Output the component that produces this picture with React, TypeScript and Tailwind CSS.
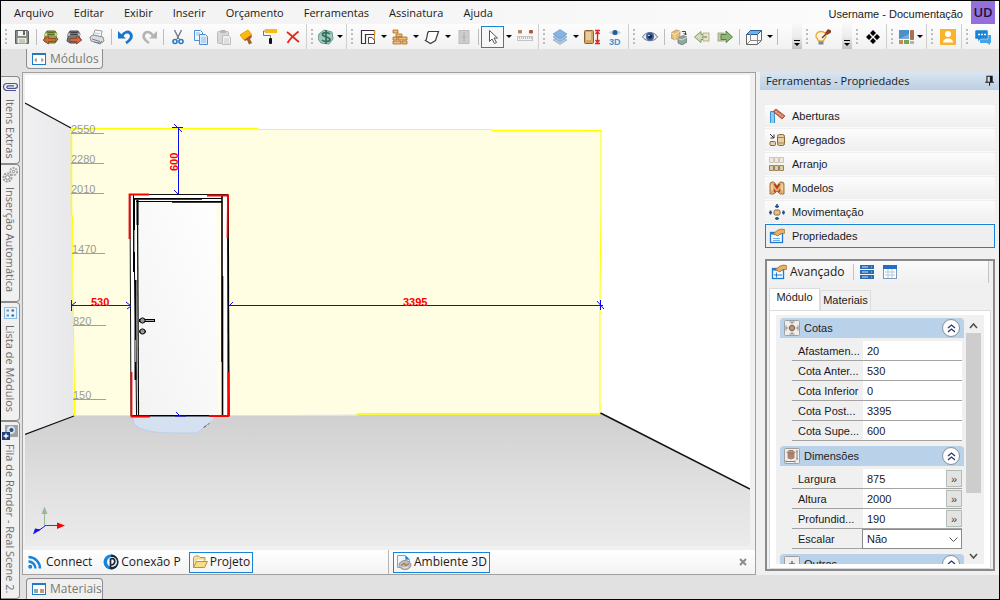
import { useState } from 'react';
import type { ReactNode } from 'react';

const icons: { [key: string]: ReactNode } = {
  save: (
    <>
      <path d="M1.5 1.5h12l1 1v12h-13z" fill="#8b8b8b" stroke="#5c5c5c" />
      <rect x="4" y="2" width="8" height="5" fill="#f4f4f4" />
      <rect x="9" y="2" width="2" height="4" fill="#666" />
      <rect x="3.5" y="9" width="9" height="5.5" fill="#e8efe0" />
      <path d="M5 11h6M5 13h6" stroke="#9aa98c" />
    </>
  ),
  chestIn: (
    <>
      <path d="M2 5l2-3h8l2 3-1 3 2 2-3 4H4l-3-2 1-4z" fill="#93a04a" stroke="#5c6a25" />
      <path d="M3 5.500h10M4.500 3.500h7" stroke="#5c6a25" />
      <path d="M2 6l2-1M12 5l2 1" stroke="#e0e59c" strokeWidth="2" />
      <path d="M0 11l5.500-4v2.500H13v3H5.500V15z" fill="#d4683a" stroke="#7a3216" strokeWidth=".6" />
    </>
  ),
  chestOut: (
    <>
      <path d="M2 5l2-3h8l2 3-1 3 2 2-3 4H4l-3-2 1-4z" fill="#77777f" stroke="#4b4b52" />
      <path d="M3 5.500h10M4.500 3.500h7" stroke="#3f3f46" />
      <path d="M2 6l2-1M12 5l2 1" stroke="#c5c5cd" strokeWidth="2" />
      <path d="M16 11l-5.500-4v2.500H4v3h6.500V15z" fill="#d4683a" stroke="#7a3216" strokeWidth=".6" />
    </>
  ),
  print: (
    <>
      <path d="M4 7l2-6 7 1-1 6z" fill="#fff" stroke="#9b9b9b" />
      <path d="M6 4l5 .5M6 6l4 .5" stroke="#a9c8ea" />
      <path d="M1 8l3-2 10 2 1 4-4 3-9-3z" fill="#dcdcde" stroke="#8f8f94" />
      <path d="M3 10l8 2.500M5 13l6 1 2-2" stroke="#6f7f96" fill="none" />
    </>
  ),
  undo: (
    <>
      <path d="M4 7c2-4 6-5 8-3 3 3 1 7-4 10" fill="none" stroke="#1875cf" strokeWidth="2.800" />
      <path d="M0 2v7.500h8z" fill="#1875cf" />
    </>
  ),
  redo: (
    <>
      <path d="M12 7C10 3 6 2 4 4c-3 3-1 7 4 10" fill="none" stroke="#b4b4b4" strokeWidth="2.600" />
      <path d="M16 2v7.500H8z" fill="#b4b4b4" />
    </>
  ),
  cut: (
    <>
      <path d="M4.500 1l4.500 9M11.500 1L7 10" stroke="#6e7b88" strokeWidth="1.400" />
      <circle cx="5" cy="12.500" r="2" fill="none" stroke="#2878c8" strokeWidth="1.600" />
      <circle cx="11" cy="12.500" r="2" fill="none" stroke="#2878c8" strokeWidth="1.600" />
    </>
  ),
  copy: (
    <>
      <path d="M1.500 1.500h6l2 2v8h-8z" fill="#eef6ff" stroke="#4d8fd6" />
      <path d="M6.500 5.500h6l2 2v8h-8z" fill="#dcecfc" stroke="#4d8fd6" />
      <path d="M3 4h4M3 6h3M8 9h5M8 11h5M8 13h5" stroke="#8fbbe8" />
    </>
  ),
  paste: (
    <>
      <rect x="1.500" y="2.500" width="11" height="12" rx="1" fill="#d8d8d8" stroke="#bdbdbd" />
      <rect x="4.500" y="1" width="5" height="3" fill="#b5b5b5" />
      <path d="M6.500 6.500h6l2 2v7h-8z" fill="#f1f1f1" stroke="#bdbdbd" />
      <path d="M8 10h5M8 12h5M8 14h5" stroke="#cdcdcd" />
    </>
  ),
  brush: (
    <>
      <path d="M1 6l8-5 4 5-8 5z" fill="#fdb913" stroke="#e8a400" />
      <path d="M5 11l7-5 1 2-2 2 2 4-3 1.500L8 11l-2 1z" fill="#a45c2a" />
    </>
  ),
  roller: (
    <>
      <rect x="3" y="0" width="12" height="4" fill="#fdb913" />
      <path d="M3 2H1.500v4.500h7V9" fill="none" stroke="#777" />
      <rect x="7" y="9" width="3" height="6" rx="1" fill="#111" />
    </>
  ),
  remove: (
    <path d="M2 3c4 3 8 7 12 10M13.500 2.500C9 6 5 10 2.500 14" fill="none" stroke="#e02c1b" strokeWidth="1.800" />
  ),
  dollar: (
    <>
      <path d="M1 5l5-4 8 2 1 7-4 5-8-1-3-4z" fill="#a5c8ba" stroke="#6c9c92" />
      <path d="M12 5C10 3 4.500 3 4.500 5.500S12 8 12 10.500 6 13 4 11M8 1v14" fill="none" stroke="#2d6f5e" strokeWidth="1.700" />
    </>
  ),
  wall: (
    <>
      <path d="M1.500 14.500v-13h13v4h-9v9z" fill="#fff" stroke="#3a2f45" strokeWidth="1.200" />
      <path d="M14.500 1v13.500h-7" fill="none" stroke="#d08a3a" />
      <path d="M8.500 14.500v-6h3.500l2.500 3v3z" fill="#fff" stroke="#4a4a55" />
    </>
  ),
  bricks: (
    <path d="M1 1h5v3H1zM4 5h6v3H4zM1 8h4v3H1zM6 8h9v3H6zM1 12h8v3H1zM10 12h5v3h-5z" fill="#edbd70" stroke="#a8682a" strokeWidth=".8" />
  ),
  floor: <path d="M4.500 2.500h10l-3 9-5 3-5-3c2-1 1-7 3-9z" fill="#fdfdfd" stroke="#3c3c3c" strokeWidth="1.200" />,
  column: (
    <>
      <rect x="3" y="1.500" width="10" height="13" fill="#cdcdcd" stroke="#bdbdbd" />
      <path d="M8 3v10M6 8h4" stroke="#b0b0b0" />
    </>
  ),
  cursor: <path d="M4.500 1.500v11l2.500-2.500 2.500 4.500 2-1-2.500-4.500h3.500z" fill="#fff" stroke="#555" />,
  ruler: (
    <>
      <rect x="1" y="1" width="4" height="3.500" rx="1" fill="#b98257" />
      <rect x="12" y="1" width="4" height="3.500" rx="1" fill="#b9523f" />
      <rect x=".5" y="7.500" width="15" height="4" fill="#f2f2f2" stroke="#c4c4c4" />
      <path d="M2 9h13" stroke="#888" strokeDasharray="1 1" />
    </>
  ),
  layers: (
    <>
      <path d="M1 11l7 4.500 7-4.500-7-4z" fill="#b4c8dc" stroke="#84a0bc" strokeWidth=".6" />
      <path d="M1 8l7 4.500L15 8 8 4z" fill="#a0c0e2" stroke="#6f98c4" strokeWidth=".6" />
      <path d="M1 5l7 4.500L15 5 8 .5z" fill="#86b5e4" stroke="#5b8dc0" strokeWidth=".6" />
    </>
  ),
  doorHeight: (
    <>
      <rect x=".5" y="1.500" width="9" height="13" rx="1" fill="#d3a569" stroke="#8b6333" />
      <rect x="2" y="3" width="5" height="8" fill="#e9cb9c" />
      <path d="M11 1.500h5M11 14.500h5M13.500 2v12M11.500 5l2-2.500 2 2.500M11.500 11l2 2.500 2-2.500" fill="none" stroke="#e2231a" strokeWidth="1.300" />
    </>
  ),
  view3d: (
    <>
      <path d="M2 3.500C5 0 11 0 14 3.500 11 7 5 7 2 3.500z" fill="#c8d7e4" />
      <circle cx="8" cy="3.500" r="2.500" fill="#1f5f97" />
      <text x="2" y="15.500" fontSize="9" fontWeight="700" fill="#4a90c9" fontFamily="Liberation Sans, sans-serif">3D</text>
    </>
  ),
  eye: (
    <>
      <path d="M.5 8C4 2 12 2 15.500 8 12 13 4 13 .5 8z" fill="#e9eef6" stroke="#6c7488" />
      <circle cx="8" cy="7.500" r="4" fill="#3d5f9e" />
      <circle cx="8" cy="7.500" r="2" fill="#16213f" />
      <circle cx="7" cy="6.500" r=".8" fill="#fff" />
    </>
  ),
  boxes: (
    <>
      <path d="M0 4l5-3 4 1v6l-5 3-4-2z" fill="#e3bb7a" stroke="#b08a4d" strokeWidth=".7" />
      <path d="M0 4l4 1.500 5-3.500M4 5.500V11" stroke="#fbe6bd" fill="none" />
      <path d="M7 9.500l5-3 4 1.500v5l-5 3-4-2z" fill="#93a59c" stroke="#5c7167" strokeWidth=".7" />
      <path d="M7 9.500l4 1.500 5-3" stroke="#d5ded9" fill="none" />
      <path d="M11 2.500h3.500V6M12.500 4l2 2 1.500-1.500" stroke="#444" fill="none" />
    </>
  ),
  arrowLeft: (
    <>
      <path d="M.5 8L7 2.500v3h5v5H7v3z" fill="#d2dcbc" stroke="#7f9863" />
      <rect x="9" y="4" width="6" height="8" fill="#ece2c6" stroke="#9b9b78" strokeWidth=".7" />
      <path d="M8 8h5" stroke="#9fb286" strokeWidth="2" />
    </>
  ),
  arrowRight: (
    <>
      <rect x="1" y="4" width="6" height="8" fill="#c5cbab" stroke="#8b9568" strokeWidth=".7" />
      <path d="M15.500 8L9 2v3.500H4v5h5v3z" fill="#92b578" stroke="#54803d" />
    </>
  ),
  cube: (
    <>
      <path d="M4.500 1.500h11v10l-4 4H.500v-10z" fill="#fafafa" stroke="#666" />
      <path d="M.5 5.500h11l4-4h-11z" fill="#6cb2f0" stroke="#2a5f95" />
      <path d="M11.500 5.500v10M4.500 5v7M.5 15.500l4-4h11" stroke="#888" fill="none" />
    </>
  ),
  bulb: (
    <>
      <path d="M1 7c0-6 10-6 10 0 0 2-2 3-2.500 5h-5C3 10 1 9 1 7z" fill="#fff4d8" stroke="#eda63a" strokeWidth="1.300" />
      <rect x="3.500" y="12.500" width="5" height="3" fill="#7d8794" />
      <path d="M10 4l3-4 3 1.500v2L12 6z" fill="#8b3e1e" />
      <path d="M7 9l4-4" stroke="#444" strokeWidth="1.300" />
    </>
  ),
  diamonds: <path d="M8 1l3 3-3 3-3-3zM8 9l3 3-3 3-3-3zM4 5l3 3-3 3-3-3zM12 5l3 3-3 3-3-3z" fill="#000" />,
  tiles: (
    <>
      <rect x="1" y="1" width="10" height="9" fill="#4d8fc9" />
      <path d="M1 10h10V5z" fill="#75aede" />
      <rect x="12" y="1" width="4" height="10" rx="1" fill="#a8724c" />
      <rect x="1" y="11" width="4" height="4" fill="#c98a52" />
      <rect x="6" y="11" width="5" height="4" fill="#7ba348" />
      <rect x="12" y="12" width="4" height="3" fill="#b3b3b3" />
    </>
  ),
  person: (
    <>
      <rect width="16" height="16" fill="#fbb429" />
      <circle cx="8" cy="5" r="3" fill="#fff" />
      <path d="M3 13.500C3 8 13 8 13 13.500z" fill="#fff" />
    </>
  ),
  chat: (
    <>
      <path d="M5 6h11v8h-1v2l-3-2H5z" fill="#4aa3e3" />
      <path d="M1 1h11l1 1v8H6l-3 2.500V10H0V2z" fill="#1684d8" stroke="#f6f6f6" strokeWidth=".5" />
      <path d="M3 5.500h2M6 5.500h2M9 5.500h2" stroke="#fff" strokeWidth="1.500" />
    </>
  ),
  modules: (
    <>
      <rect x="1.500" y="2.500" width="13" height="11" fill="#fff" stroke="#1f78c8" />
      <path d="M1 3h14" stroke="#1f78c8" strokeWidth="2" />
      <path d="M3.500 9L5.500 7v4zM12.500 9l-2-2v4z" fill="#8d8278" stroke="#c3ab96" strokeWidth=".7" />
    </>
  ),
  materials: (
    <>
      <rect x="1.500" y="2.500" width="13" height="11" fill="#fff" stroke="#1f78c8" />
      <path d="M1 3h14" stroke="#1f78c8" strokeWidth="2" />
      <rect x="3" y="8" width="4" height="4" fill="#8fa99b" />
      <rect x="9" y="8" width="4" height="4" fill="#d0966c" />
    </>
  ),
  clip: (
    <path d="M14 11.500H5a3.500 3.500 0 010-7h8a2.300 2.300 0 010 4.800H6a1.200 1.200 0 010-2.400h6" fill="none" stroke="#4a5291" strokeWidth="1.200" />
  ),
  gears: (
    <>
      <circle cx="5.500" cy="10.500" r="4" fill="none" stroke="#9d9d9d" strokeWidth="2" strokeDasharray="2 1" />
      <circle cx="5.500" cy="10.500" r="2" fill="none" stroke="#8d8d8d" />
      <circle cx="11.500" cy="4.500" r="3.500" fill="none" stroke="#a5a5a5" strokeWidth="2" strokeDasharray="2 1" />
      <circle cx="11.500" cy="4.500" r="1.200" fill="none" stroke="#8d8d8d" />
    </>
  ),
  moduleList: (
    <>
      <rect x="2.500" y="2.500" width="12" height="11" fill="#eaf4fd" stroke="#8abce4" />
      <path d="M4.500 5.500h2.500M4.500 10.500h2.500" stroke="#6f8fae" strokeWidth="2" />
      <path d="M9.500 5.500h2.500M9.500 10.500h2.500" stroke="#2e6ba6" strokeWidth="2" />
    </>
  ),
  renderQueue: (
    <>
      <rect x="3" y="1" width="13" height="12" fill="#9ea3a9" />
      <circle cx="9" cy="6" r="4" fill="#dbe2ea" />
      <circle cx="9.500" cy="6" r="2" fill="#234a78" />
      <rect x="0" y="8" width="8" height="8" fill="#22407c" />
      <path d="M4 9.500v5M1.500 12h5" stroke="#fff" strokeWidth="1.400" />
    </>
  ),
  connect: (
    <>
      <circle cx="3.200" cy="12.800" r="2" fill="#1684d8" />
      <path d="M1.500 7.500a7 7 0 017 7M1.500 3a11.500 11.500 0 0111.500 11.500" fill="none" stroke="#1684d8" strokeWidth="2.400" />
    </>
  ),
  conexao: (
    <>
      <circle cx="8" cy="8" r="7.500" fill="#1684d8" />
      <path d="M8 .5a7.500 7.500 0 010 15z" fill="#1d2738" />
      <circle cx="9" cy="8" r="5" fill="#f4f7fa" />
      <path d="M7.500 15V4.500M7.500 5C13 2.500 13.500 11.500 7.500 11" fill="none" stroke="#1d2738" strokeWidth="1.700" />
    </>
  ),
  folder: (
    <>
      <path d="M1.500 13.500v-10l2-1.500h3l1.500 1.500h5v3" fill="#f8e6a6" stroke="#c0913a" />
      <path d="M4 5h8v4H4z" fill="#fff" stroke="#d9b765" strokeWidth=".7" />
      <path d="M1.500 13.500l3-6h11l-3 6z" fill="#fbdc82" stroke="#c0913a" />
    </>
  ),
  ambient: (
    <>
      <path d="M1.500 13.500v-12h8l4 4v8z" fill="#eef6fd" stroke="#74a8dc" />
      <path d="M9.500 1.500v4h4" fill="#2c7cc9" stroke="#74a8dc" />
      <ellipse cx="9" cy="11" rx="6" ry="4.500" fill="#b9bfc5" stroke="#8d959e" />
      <path d="M5 11.500l3-2 2 2 3-2" stroke="#bf7a37" fill="none" strokeWidth="1.500" />
      <path d="M7 13.500c2 1 4 0 5-1" stroke="#f3f3f3" fill="none" />
    </>
  ),
  pin: (
    <path d="M4.500 9V2.500h6V9M8.500 2.500V9M9.500 2.500V9M2.500 9.500h10M7.500 9.500v4" fill="none" stroke="#1a1a1a" strokeWidth="1.200" />
  ),
  openings: (
    <>
      <path d="M1.500 15V3.500h4V15" fill="#8cc9ee" stroke="#3d93cb" />
      <path d="M4 3.500L7 1l9 7-3 3z" fill="#d4694c" stroke="#8f3c26" strokeWidth=".7" />
      <path d="M6.500 3.500l7 5" stroke="#f5cfb5" strokeWidth="1.300" strokeDasharray="1.500 1" />
    </>
  ),
  aggregates: (
    <>
      <rect x="8.500" y="2.500" width="7" height="11" rx="2" fill="#e6cda3" stroke="#8a6532" />
      <path d="M9 5.500h6M9 11h6" stroke="#a98552" />
      <rect x="1" y="9.500" width="5.500" height="4" rx="1" fill="#e6cda3" stroke="#8a6532" />
      <path d="M1 2l4 4M5 2.500V6H1.500" fill="none" stroke="#333" />
    </>
  ),
  array: (
    <>
      <path d="M.5 1.500h4v5h-4zM5.500 1.500h4v5h-4zM10.500 1.500h4v5h-4z" fill="#f0eadf" stroke="#cdc5b7" />
      <path d="M.5 9.500h4v5h-4zM5.500 9.500h4v5h-4zM10.500 9.500h4v5h-4z" fill="#e0cba8" stroke="#98835e" />
    </>
  ),
  models: (
    <>
      <path d="M1 4q0-2 2-2h2l3 4 3-4h2q2 0 2 2v10h-4l-3-3-3 3H1z" fill="#ddae6e" stroke="#a87840" />
      <path d="M5.500 4L8 8l2.500-4M5 9.500l1.500 3M11 9.500l-1.500 3" fill="none" stroke="#b7361d" strokeWidth="1.600" />
      <path d="M3 4.500v6M13 4.500v6" stroke="#f8dcae" strokeWidth="1.500" />
    </>
  ),
  move: (
    <>
      <rect x="5" y="6" width="6" height="5" rx="1.500" fill="#e0c294" stroke="#8a6532" />
      <path d="M8 0v4M6 2.500h4M8 13v3M6 14.500h4M0 8.500h3M1.500 6.500v4M13 8.500h3M14.500 6.500v4" stroke="#234f87" strokeWidth="1.600" />
    </>
  ),
  properties: (
    <>
      <rect x="1.500" y="4.500" width="12" height="10" fill="#f4faff" stroke="#1e7bd0" strokeWidth="1.300" />
      <path d="M4 10.500h7M4 12.500h7" stroke="#6fb0e8" />
      <path d="M2 5.500h10" stroke="#1e7bd0" strokeWidth="2" />
      <path d="M4 6l5-4 4-1 3 1v3l-5 1-2 2-2-1z" fill="#e8b262" stroke="#99692c" strokeWidth=".8" />
    </>
  ),
  advanced: (
    <>
      <rect x="1.500" y="4.500" width="11" height="10" fill="#f4faff" stroke="#1e7bd0" strokeWidth="1.300" />
      <path d="M5.500 8.500v5M3 11h8" stroke="#1e7bd0" />
      <path d="M2 5.500h10" stroke="#1e7bd0" strokeWidth="2" />
      <path d="M4 6l5-4 4-1 3 1v3l-5 1-2 2-2-1z" fill="#e8b262" stroke="#99692c" strokeWidth=".8" />
    </>
  ),
  rows: (
    <>
      <path d="M1 1h14v4H1zM1 6h14v4H1zM1 11h14v4H1z" fill="#2c6cb0" />
      <path d="M3 3h6M3 8h6M3 13h6" stroke="#cfe2f5" />
      <path d="M12 3h1M12 8h1M12 13h1" stroke="#8ed0ff" />
    </>
  ),
  grid: (
    <>
      <rect x="1.500" y="2.500" width="13" height="12" fill="#fff" stroke="#7b98bb" />
      <rect x="1" y="1" width="14" height="4" fill="#1f6fc4" />
      <path d="M6 5v9M10 5v9M3 8h10M3 11h10" stroke="#b5c9df" />
    </>
  ),
  cotas: (
    <>
      <rect x=".5" y=".5" width="15" height="15" rx="1" fill="#eee" stroke="#a0a0a0" />
      <rect x="5.500" y="5.500" width="5" height="5" rx="1.500" fill="#b98b73" stroke="#8b7060" />
      <path d="M2 5.500v5M14 5.500v5M5.500 2h5M5.500 14h5M2 8h2.500M11.500 8H14M8 2v2.500M8 11.500V14" stroke="#8a8a8a" />
    </>
  ),
  dims: (
    <>
      <rect x=".5" y=".5" width="15" height="15" rx="1" fill="#eee" stroke="#a0a0a0" />
      <path d="M3 4.500l2-2h4l2 2-1 1v4.500l-3 1-3-1V5.500z" fill="#c09a84" stroke="#8b6c58" strokeWidth=".8" />
      <path d="M4 5h6M6 5.500v4M8 5.500v4" stroke="#8b5b44" strokeWidth=".8" />
      <path d="M12 3h2M12 11h2M13 3v8M2 13.500h9M2 12.500v2M11 12.500v2" stroke="#808080" />
    </>
  ),
  others: (
    <>
      <rect x=".5" y=".5" width="15" height="15" rx="1" fill="#eee" stroke="#a0a0a0" />
      <path d="M8 5v7M5 8h6" stroke="#707070" strokeWidth="1.500" />
    </>
  ),
};

function Icon({ name, className = 'size-4' }: { name: string; className?: string }) {
  return (
    <svg viewBox="0 0 16 16" className={`${className} shrink-0`} aria-hidden="true">
      {icons[name]}
    </svg>
  );
}

const Grip = () => (
  <span className="w-[9px] h-4 flex flex-col items-center justify-between">
    <i className="size-[2px] bg-[#bcbcbc]" />
    <i className="size-[2px] bg-[#bcbcbc]" />
    <i className="size-[2px] bg-[#bcbcbc]" />
    <i className="size-[2px] bg-[#bcbcbc]" />
  </span>
);

const Sep = () => (
  <span className="w-[6px] h-4 flex justify-center">
    <i className="w-px h-full bg-[#bdbdbd]" />
  </span>
);

const Tool = ({ icon, label, tight }: { icon: string; label: string; tight?: boolean }) => (
  <button type="button" aria-label={label} className={`${tight ? 'w-[19px]' : 'w-[23px]'} h-[22px] flex items-center justify-center`}>
    <Icon name={icon} />
  </button>
);

const Caret = ({ label }: { label: string }) => (
  <button type="button" aria-label={label} className="w-[9px] h-[22px] flex items-center justify-center">
    <svg viewBox="0 0 6 3" className="w-[6px] h-[3px]" aria-hidden="true">
      <path d="M0 0h6L3 3z" fill="#000" />
    </svg>
  </button>
);

const Overflow = () => (
  <button type="button" aria-label="Mais botões" className="w-[10px] h-full flex items-end justify-center pb-[3px] bg-gradient-to-b from-[#f8f8f8] via-[#ececec] to-[#c2c2c2]">
    <svg viewBox="0 0 6 6" className="size-[6px]" aria-hidden="true">
      <path d="M0 0h6v1H0zM0 3h6L3 6z" fill="#000" />
    </svg>
  </button>
);

const Group = ({ children, last }: { children: ReactNode; last?: boolean }) => (
  <div className={`h-full flex items-center shrink-0 ${last ? '' : 'border-r border-[#cfcfcf] pr-[2px]'}`}>
    <Grip />
    {children}
  </div>
);

const menus = ['Arquivo', 'Editar', 'Exibir', 'Inserir', 'Orçamento', 'Ferramentas', 'Assinatura', 'Ajuda'];

const sideTabs = [
  { icon: 'clip', label: 'Itens Extras', className: 'h-[88px]' },
  { icon: 'gears', label: 'Inserção Automática', className: 'h-[138px]' },
  { icon: 'moduleList', label: 'Lista de Módulos', className: 'h-[119px]' },
  { icon: 'renderQueue', label: 'Fila de Render - Real Scene 2.', className: 'flex-1 min-h-0' },
];

const tools = [
  { icon: 'openings', label: 'Aberturas' },
  { icon: 'aggregates', label: 'Agregados' },
  { icon: 'array', label: 'Arranjo' },
  { icon: 'models', label: 'Modelos' },
  { icon: 'move', label: 'Movimentação' },
  { icon: 'properties', label: 'Propriedades' },
];

const cotas = [
  { id: 'afastamento', label: 'Afastamen...', value: '20' },
  { id: 'cota-anterior', label: 'Cota Anter...', value: '530' },
  { id: 'cota-inferior', label: 'Cota Inferior', value: '0' },
  { id: 'cota-posterior', label: 'Cota Post...', value: '3395' },
  { id: 'cota-superior', label: 'Cota Supe...', value: '600' },
];

const dimensoes = [
  { id: 'largura', label: 'Largura', value: '875' },
  { id: 'altura', label: 'Altura', value: '2000' },
  { id: 'profundidade', label: 'Profundid...', value: '190' },
];

const levels = [
  { x: 71, y: 133, value: '2550' },
  { x: 71, y: 163, value: '2280' },
  { x: 71, y: 193, value: '2010' },
  { x: 72, y: 253, value: '1470' },
  { x: 73, y: 325, value: '820' },
  { x: 73, y: 399, value: '150' },
];

function Scene() {
  return (
    <svg viewBox="25 75 725 471" preserveAspectRatio="xMidYMid slice" className="block w-full flex-1 min-h-0 bg-white" role="img" aria-label="Ambiente 3D">
      <defs>
        <linearGradient id="floor" x1="0" y1="0" x2="0" y2="1">
          <stop offset="0" stopColor="#cfcfcf" />
          <stop offset="0.5" stopColor="#dfdfdf" />
          <stop offset="1" stopColor="#ebebeb" />
        </linearGradient>
        <linearGradient id="side" x1="0" y1="0" x2="1" y2="0">
          <stop offset="0" stopColor="#f0f0f1" />
          <stop offset="1" stopColor="#e8e8eb" />
        </linearGradient>
        <linearGradient id="leaf" x1="0" y1="1" x2="1" y2="0">
          <stop offset="0" stopColor="#f3f3f4" />
          <stop offset="1" stopColor="#fff" />
        </linearGradient>
      </defs>

      {/* room */}
      <path d="M25 103L71 128 74 416 25 434z" fill="url(#side)" />
      <path d="M25 434L74 416 600 413 750 489V546H25z" fill="url(#floor)" />
      <path d="M71 128L601 130 600 413 74 416z" fill="#fffee2" />
      <path d="M71.500 128.500H258V129.500H492V130.500H601V207L600 300V413.500H357V415.500H74.500V392L73 300 72.500 216 71.500 215z" fill="none" stroke="#ffff00" />
      <path d="M71 128.500H258M492 130.500H601M357 414H600M71.500 128V215M74.500 392V416" fill="none" stroke="#ffff00" strokeWidth="1.500" />
      <path d="M25 103L71 128M25 434.500L74 416" fill="none" stroke="#111" strokeWidth="1.200" />
      <path d="M600.500 413L750 489" stroke="#111" strokeWidth="1.500" />

      {/* heights on the wall */}
      {levels.map(level => (
        <g key={level.value}>
          <text x={level.x} y={level.y} fontSize="11" fill="#9b9b98" fontFamily="Liberation Sans, sans-serif">{level.value}</text>
          <path d={`M${level.x} ${level.y + 0.5}h33`} stroke="#a0a09a" />
        </g>
      ))}

      {/* door swing */}
      <path d="M133 416L134 424Q142 433 172 433H197L218 416z" fill="#d5e1f1" stroke="#bdd0e6" />
      <path d="M204 427.500l2-2M208 424.500l1-1" stroke="#111" />

      {/* frame and leaf */}
      <path d="M130 194.500H228L229 416H131z" fill="#fff" stroke="#111" />
      <path d="M137 200H223V416H138z" fill="url(#leaf)" />
      <path d="M216 203H221V415H218z" fill="#fffde9" />
      <path d="M133.500 194V198.500H222M134 199V250L135.500 320 136.500 416M136 201.500H222" fill="none" stroke="#000" />
      <path d="M134.500 199H202M172 202H222" stroke="#000" strokeWidth="1.600" />
      <path d="M134 198V272M135.500 280V380M137.500 200V225" stroke="#000" strokeWidth="2" />
      <path d="M137.500 200L138.500 416" stroke="#000" strokeWidth="1.200" />
      <path d="M134.500 230V252M135.500 340V362" stroke="#9a9a90" strokeWidth="1.200" />
      <path d="M222 195V362M222.500 276V416" stroke="#000" strokeWidth="1.600" />
      <path d="M228 195L228.500 416" stroke="#000" strokeWidth="1.800" />
      <path d="M131 415.500H228" stroke="#000" />

      {/* handle */}
      <path d="M139 320.500H155" stroke="#000" strokeWidth="3" />
      <path d="M142 320.500H154" stroke="#a6b0a6" />
      <circle cx="142.500" cy="320.500" r="2.600" fill="#999" stroke="#000" />
      <path d="M139 331.500H146" stroke="#000" strokeWidth="2" />
      <circle cx="142.500" cy="331.500" r="2.600" fill="#999" stroke="#000" />

      {/* selection */}
      <path d="M149 194.500H129.500V239M207 195.500H228L227.500 238M131.500 372V416.500H150M209 416H228.500V372" fill="none" stroke="#ff0000" strokeWidth="1.800" />

      {/* dimensions */}
      <g fill="none" stroke="#0c0cf0">
        <path d="M178.500 127V194M172 127.500H183M174 124L182 132M174 190L178 194" />
        <path d="M71.500 300V311M71 305.500H131M71 306L76 302M126 302L131 306L127 309" />
        <path d="M229 305.500H603M229 306L233 302M600.500 300V310M597 301L604 309M175 416H186M176 412L180 416" />
      </g>
      <g fontSize="11" fontWeight="700" fill="#ff0000" fontFamily="Liberation Sans, sans-serif">
        <text x="91" y="306">530</text>
        <text x="403" y="306">3395</text>
        <text transform="translate(178 171) rotate(-90)">600</text>
      </g>

      {/* axes */}
      <path d="M44.500 526V512" stroke="#9bb89b" />
      <path d="M44.500 506.500L47.500 514H41.500z" fill="#9bb89b" />
      <path d="M45 525.500H58" stroke="#ff0000" />
      <path d="M57 522.500L65 525.500 57 529z" fill="#ff0000" />
      <path d="M45 526L38 531" stroke="#1010ff" />
      <path d="M41 529.500L33 534.500 35 528.500z" fill="#1010ff" />
    </svg>
  );
}

function GroupHeader({ icon, title }: { icon: string; title: string }) {
  return (
    <div className="h-5 shrink-0 rounded-t bg-[#bad1ea] flex items-center px-1 gap-1 text-[#1e1e1e]">
      <Icon name={icon} />
      <span className="flex-1 leading-5">{title}</span>
      <button type="button" aria-label={`Recolher ${title}`} className="size-[18px] rounded-full bg-white border border-[#8a8f96] flex items-center justify-center">
        <svg viewBox="0 0 9 9" className="size-[9px]" aria-hidden="true">
          <path d="M1 4l3.500-3L8 4M1 8l3.500-3L8 8" fill="none" stroke="#24387c" strokeWidth="1.300" />
        </svg>
      </button>
    </div>
  );
}

function Field({ id, label, value, more }: { id: string; label: string; value: string; more?: boolean }) {
  return (
    <div className="h-5 flex border-b border-[#a3a3a3]">
      <label htmlFor={id} className="w-[71px] pl-[6px] leading-5 whitespace-nowrap">{label}</label>
      <input id={id} defaultValue={value} className="flex-1 min-w-0 h-full bg-white pl-1 outline-none" />
      {more && (
        <button type="button" aria-label={`Mais opções de ${label}`} className="w-4 my-px border border-[#b4bcb8] bg-[#e3e3e3] text-[11px] leading-3 text-[#444]">
          »
        </button>
      )}
    </div>
  );
}

export default function App() {
  const [selected, setSelected] = useState('Propriedades');
  const [tab, setTab] = useState('Módulo');

  return (
    <div className="h-screen flex flex-col border border-black bg-[#e1e1e1] text-[12px] text-[#1a1a1a] font-['Open_Sans',sans-serif] overflow-hidden">
      <header className="h-[23px] shrink-0 flex items-center bg-gradient-to-r from-[#f0f0f0] to-[#fdfdfd]">
        <nav className="flex items-center pl-[13px] gap-5 text-[11px]">
          {menus.map(menu => (
            <button key={menu} type="button" className="leading-5">{menu}</button>
          ))}
        </nav>
        <span className="ml-auto mt-1 mr-2 font-['Liberation_Sans',sans-serif] text-[11px]">Username - Documentação</span>
        <span className="w-6 h-full mr-1 bg-[#9370db] text-center text-[13px] leading-[22px] text-[#1c1233] font-semibold">UD</span>
      </header>

      <div role="toolbar" className="h-[25px] shrink-0 flex items-stretch bg-gradient-to-b from-[#fdfdfd] to-[#f1f1f1]">
        <Group>
          <Tool icon="save" label="Salvar" />
          <Sep />
          <Tool icon="chestIn" label="Importar" />
          <Tool icon="chestOut" label="Exportar" />
          <Tool icon="print" label="Imprimir" />
          <Sep />
          <Tool icon="undo" label="Desfazer" />
          <Tool icon="redo" label="Refazer" />
          <Sep />
          <Tool icon="cut" label="Recortar" />
          <Tool icon="copy" label="Copiar" />
          <Tool icon="paste" label="Colar" />
          <Tool icon="brush" label="Pincel" />
          <Tool icon="roller" label="Pintar" />
          <Tool icon="remove" label="Excluir" />
        </Group>
        <Group>
          <Tool icon="dollar" label="Orçamento" tight />
          <Caret label="Opções de orçamento" />
        </Group>
        <Group>
          <Tool icon="wall" label="Parede" />
          <Caret label="Opções de parede" />
          <Tool icon="bricks" label="Alvenaria" />
          <Caret label="Opções de alvenaria" />
          <Tool icon="floor" label="Piso" />
          <Caret label="Opções de piso" />
          <Tool icon="column" label="Coluna" />
          <Sep />
          <button type="button" aria-label="Selecionar" className="w-[23px] h-[22px] border border-[#1883d7] bg-[#f7f7f7] flex items-center justify-center">
            <Icon name="cursor" />
          </button>
          <Caret label="Opções de seleção" />
          <Tool icon="ruler" label="Medir" />
        </Group>
        <Group>
          <Tool icon="layers" label="Camadas" />
          <Caret label="Opções de camadas" />
          <Tool icon="doorHeight" label="Altura" />
          <Tool icon="view3d" label="Visão 3D" />
        </Group>
        <div className="flex items-center">
          <Grip />
          <Tool icon="eye" label="Visualizar" />
          <Sep />
          <Tool icon="boxes" label="Substituir" />
          <Tool icon="arrowLeft" label="Anterior" />
          <Tool icon="arrowRight" label="Próximo" />
          <Sep />
          <Tool icon="cube" label="Vista" />
          <Caret label="Opções de vista" />
          <Sep />
          <span className="w-3" />
          <Overflow />
        </div>
        <div className="flex items-center">
          <Grip />
          <Tool icon="bulb" label="Iluminação" />
          <span className="w-2" />
          <Overflow />
        </div>
        <Group>
          <Tool icon="diamonds" label="Organizar" />
        </Group>
        <Group>
          <Tool icon="tiles" label="Painéis" tight />
          <Caret label="Opções de painéis" />
        </Group>
        <Group>
          <Tool icon="person" label="Conta" />
        </Group>
        <Group last>
          <Tool icon="chat" label="Chat" />
        </Group>
      </div>

      <div className="flex-1 min-h-0 flex">
        <aside className="w-[19px] shrink-0 flex flex-col pt-[27px] text-[11px]">
          {sideTabs.map(item => (
            <button
              key={item.label}
              type="button"
              className={`${item.className} shrink-0 border border-l-0 border-[#8c8c8c] rounded-r bg-[#f0f0f0] text-[#6d6d6d] flex flex-col items-center justify-start gap-1 pt-[2px]`}
            >
              <Icon name={item.icon} />
              <span className="[writing-mode:vertical-rl] leading-4 whitespace-nowrap">{item.label}</span>
            </button>
          ))}
        </aside>

        <div className="flex-1 min-w-0 flex flex-col">
          <div className="h-[23px] shrink-0 pl-[6px]">
            <button type="button" className="h-5 w-[77px] flex items-center gap-[3px] pl-1 border border-t-0 border-[#8c8c8c] rounded-b bg-[#f0f0f0] text-[#7a7a72]">
              <Icon name="modules" />
              Módulos
            </button>
          </div>

          <div className="flex-1 min-h-0 flex">
            <main className="flex-1 min-w-0 ml-[2px] flex flex-col border border-[#a0a0a0] bg-[#f0f0f0]">
              <div className="flex-1 min-h-0 flex pl-[2px] pt-[2px] pr-[5px] pb-1">
                <Scene />
              </div>
              <div className="h-6 shrink-0 flex items-center">
                <div className="w-1/2 shrink-0 h-full flex items-center pl-1 bg-gradient-to-b from-white to-[#f3f3f3] border-r border-[#b5b5b5]">
                  <button type="button" className="flex items-center gap-[3px]"><Icon name="connect" />Connect</button>
                  <button type="button" className="flex items-center gap-[2px] ml-[11px]"><Icon name="conexao" />Conexão P</button>
                  <button type="button" className="h-[21px] ml-2 px-[2px] flex items-center gap-[2px] border border-[#1883d7]">
                    <Icon name="folder" />Projeto
                  </button>
                </div>
                <div className="flex-1 min-w-0 h-full flex items-center pl-1 pr-2 bg-gradient-to-b from-white to-[#f3f3f3]">
                  <button type="button" className="h-[21px] px-[2px] flex items-center gap-[2px] border border-[#1883d7]">
                    <Icon name="ambient" />Ambiente 3D
                  </button>
                  <button type="button" aria-label="Fechar" className="ml-auto">
                    <svg viewBox="0 0 8 8" className="size-2" aria-hidden="true">
                      <path d="M1 1l6 6M7 1L1 7" stroke="#8c8c8c" strokeWidth="2" />
                    </svg>
                  </button>
                </div>
              </div>
            </main>

            <section className="w-[243px] shrink-0 flex flex-col bg-[#f0f0f0] pl-1">
              <div className="h-[18px] shrink-0 flex items-center justify-between pl-[6px] pr-[2px] bg-gradient-to-b from-[#dae5f1] to-[#bccfe2]">
                <h2 className="text-[11px]">Ferramentas - Propriedades</h2>
                <button type="button" aria-label="Fixar painel"><Icon name="pin" className="size-[14px]" /></button>
              </div>

              <ul className="mt-[14px] ml-[5px] mr-1 font-['Liberation_Sans',sans-serif] text-[11px]">
                {tools.map(tool => (
                  <li key={tool.label}>
                    <button
                      type="button"
                      onClick={() => setSelected(tool.label)}
                      className={`w-full h-6 flex items-center gap-[7px] border pl-[3px] ${
                        selected === tool.label
                          ? 'border-[#1883d7] bg-[#efefef]'
                          : 'border-transparent bg-gradient-to-b from-[#fcfcfc] to-[#efefef]'
                      }`}
                    >
                      <Icon name={tool.icon} />
                      {tool.label}
                    </button>
                  </li>
                ))}
              </ul>

              <div className="flex-1 min-h-0 mt-[11px] ml-[5px] mr-1 mb-1 flex flex-col border-2 border-[#8a8a8a]">
                <div className="h-[22px] shrink-0 mr-1 flex items-center pl-1 bg-gradient-to-b from-[#fafafa] to-[#f0f0f0] border-r border-[#c4c4c4]">
                  <button type="button" className="flex items-center gap-[3px]"><Icon name="advanced" />Avançado</button>
                  <span className="w-px h-4 bg-[#c4c4c4] ml-2 mr-[5px]" />
                  <button type="button" aria-label="Por categoria"><Icon name="rows" /></button>
                  <button type="button" aria-label="Em tabela" className="ml-[7px]"><Icon name="grid" /></button>
                </div>

                <div className="shrink-0 mt-[5px] pl-[2px] flex items-end font-['Liberation_Sans',sans-serif] text-[11px]">
                  {['Módulo', 'Materiais'].map(name => (
                    <button
                      key={name}
                      type="button"
                      onClick={() => setTab(name)}
                      className={`w-[51px] border border-b-0 border-[#dcdcdc] ${tab === name ? 'h-[22px] bg-white pb-1' : 'h-5 bg-[#f0f0f0]'}`}
                    >
                      {name}
                    </button>
                  ))}
                </div>

                <div className="flex-1 min-h-0 mx-[2px] flex bg-white border border-[#dcdcdc] px-[6px] pt-1 pb-1">
                  <div className="flex-1 min-h-0 flex bg-[#f0f0f0] font-['Liberation_Sans',sans-serif] text-[11px] overflow-hidden">
                    <div className="flex-1 min-w-0 pl-1 pt-[3px] flex flex-col">
                      <GroupHeader icon="cotas" title="Cotas" />
                      <div className="ml-3 mr-[2px] mt-[3px] shrink-0">
                        {cotas.map(field => <Field key={field.id} {...field} />)}
                      </div>

                      <div className="h-[5px] shrink-0" />
                      <GroupHeader icon="dims" title="Dimensões" />
                      <div className="ml-3 mr-[2px] mt-[3px] shrink-0">
                        {dimensoes.map(field => <Field key={field.id} {...field} more />)}
                        <div className="h-5 flex border-b border-[#a3a3a3]">
                          <label htmlFor="escalar" className="w-[70px] pl-[6px] leading-5">Escalar</label>
                          <div className="relative flex-1">
                            <select id="escalar" defaultValue="Não" className="appearance-none w-full h-5 bg-white border border-[#8a8a8a] pl-1">
                              <option>Não</option>
                              <option>Sim</option>
                            </select>
                            <svg viewBox="0 0 9 5" className="absolute right-1 top-2 w-[9px] h-[5px] pointer-events-none" aria-hidden="true">
                              <path d="M.5.5l4 4 4-4" fill="none" stroke="#555" />
                            </svg>
                          </div>
                        </div>
                      </div>

                      <div className="h-[5px] shrink-0" />
                      <GroupHeader icon="others" title="Outros" />
                    </div>

                    <div className="w-5 shrink-0 pl-[2px] pr-[3px] flex flex-col items-center">
                      <svg viewBox="0 0 9 6" className="w-[9px] h-[6px] mt-2 shrink-0" aria-hidden="true">
                        <path d="M1 5l3.500-4L8 5" fill="none" stroke="#505050" strokeWidth="1.600" />
                      </svg>
                      <div className="w-full h-[160px] mt-1 bg-[#cdcdcd]" />
                      <svg viewBox="0 0 9 6" className="w-[9px] h-[6px] mt-auto mb-[5px] shrink-0" aria-hidden="true">
                        <path d="M1 1l3.500 4L8 1" fill="none" stroke="#505050" strokeWidth="1.600" />
                      </svg>
                    </div>
                  </div>
                </div>
              </div>
            </section>
          </div>

          <div className="h-6 shrink-0 pl-[6px] pt-[3px]">
            <button type="button" className="h-[21px] w-[77px] flex items-center gap-[3px] pl-1 border border-b-0 border-[#8c8c8c] rounded-t bg-[#f0f0f0] text-[#7a7a72]">
              <Icon name="materials" />
              Materiais
            </button>
          </div>
        </div>
      </div>
    </div>
  );
}
